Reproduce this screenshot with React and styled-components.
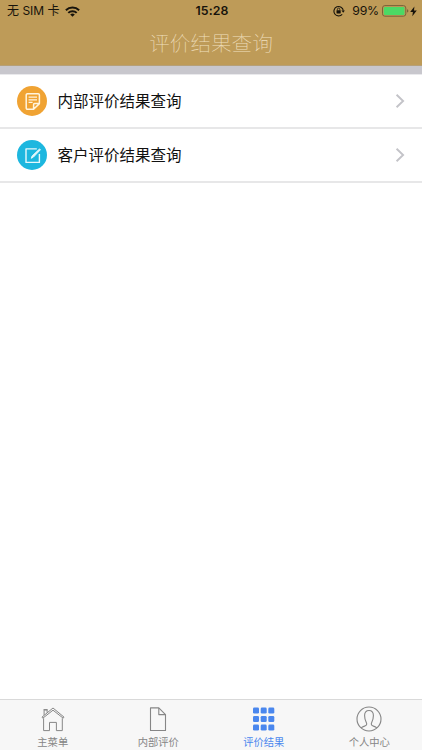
import React, { useState } from "react";
import styled, { createGlobalStyle } from "styled-components";

const GlobalStyle = createGlobalStyle`
  * {
    box-sizing: border-box;
  }
  body {
    margin: 0;
    background: #fff;
    font-family: Inter, "Noto Sans CJK SC", sans-serif;
  }
`;

const Screen = styled.div`
  display: flex;
  flex-direction: column;
  width: 100%;
  height: 100vh;
  overflow: hidden;
`;
const Header = styled.header`
  flex: none;
  height: 66px;
  background: #be9b58;
  border-bottom: 1px solid #b6a078;
`;
const StatusBar = styled.div`
  display: grid;
  grid-template-columns: 1fr auto 1fr;
  align-items: center;
  height: 22px;
  padding: 0 5px 0 7px;
  color: #17130b;
  font-size: 12.3px;
  line-height: 22px;
`;
const StatusGroup = styled.div`
  display: flex;
  align-items: center;
  justify-content: ${(props) => props.$align || "flex-start"};
  white-space: pre;
`;
const Carrier = styled.span`
  margin-right: 5px;
  font-size: 12px;
`;
const Clock = styled.span`
  font-size: 12.3px;
  font-weight: 600;
  letter-spacing: 0.1px;
`;
const Percent = styled.span`
  margin: 0 3px 0 7px;
  letter-spacing: -0.2px;
`;
const Title = styled.h1`
  margin: 0;
  height: 43px;
  color: #efdfbd;
  font-family: "Noto Sans CJK SC", sans-serif;
  font-size: 20.6px;
  font-weight: 100;
  line-height: 40px;
  text-align: center;
`;
const Strip = styled.div`
  flex: none;
  height: 9px;
  background: #c8c7cd;
  border-bottom: 1px solid #e9e9ec;
`;
const List = styled.main`
  flex: 1;
`;
const Row = styled.div`
  display: flex;
  align-items: center;
  height: 54px;
  padding: 0 17px;
  border-bottom: 2px solid #e7e7e8;
  cursor: pointer;
`;
const Badge = styled.span`
  display: flex;
  align-items: center;
  justify-content: center;
  width: 30px;
  height: 30px;
  border-radius: 50%;
  background: ${(props) => props.$color};
`;
const RowLabel = styled.span`
  flex: 1;
  margin-left: 10.5px;
  padding-bottom: 2px;
  color: #111;
  font-family: "Noto Sans CJK SC", sans-serif;
  font-size: 15.5px;
  line-height: 24px;
`;
const TabBar = styled.nav`
  flex: none;
  display: grid;
  grid-template-columns: repeat(4, 1fr);
  height: 51px;
  background: #f7f7f7;
  border-top: 1px solid #d9d9d9;
`;
const Tab = styled.button`
  display: flex;
  flex-direction: column;
  align-items: center;
  padding: 6px 0 0;
  border: 0;
  background: none;
  color: ${(props) => (props.$active ? "#4a87ee" : "#868686")};
  font-family: "Noto Sans CJK SC", sans-serif;
  font-size: 10.3px;
  font-weight: 400;
  line-height: 16px;
  cursor: pointer;

  & svg {
    margin-bottom: 2px;
  }
`;

const WifiIcon = () => (
  <svg width="15" height="11" viewBox="0 0 15 11" fill="none" stroke="#17130b" strokeWidth="2">
    <path d="M0.9 4.2a9.4 9.4 0 0 1 13.2 0" />
    <path d="M3.3 6.9a6 6 0 0 1 8.4 0" />
    <path d="M7.5 10.8L5.2 8.5a3.3 3.3 0 0 1 4.6 0z" fill="#17130b" stroke="none" />
  </svg>
);

const RotationLockIcon = () => (
  <svg width="12" height="12" viewBox="0 0 12 12" fill="none" stroke="#17130b" strokeWidth="1.1">
    <path d="M9.2 9.3A4.7 4.7 0 1 1 10.3 5.6" />
    <path d="M8.4 5.4h3.5L10.2 7.8z" fill="#17130b" stroke="none" />
    <rect x="3.5" y="5.2" width="4.2" height="3.3" rx="0.4" fill="#17130b" stroke="none" />
    <path d="M4.4 5.4V4.3a1.2 1.2 0 0 1 2.4 0v1.1" strokeWidth="0.8" />
  </svg>
);

const BatteryIcon = () => (
  <svg width="28" height="12" viewBox="0 0 28 12">
    <rect x="0.5" y="0.6" width="23.3" height="10.6" rx="2.4" fill="none" stroke="#796239" />
    <rect x="1.8" y="1.9" width="20.7" height="8" rx="1.2" fill="#4cd964" />
    <path d="M25 4.2q1.4 0.4 1.4 1.7T25 7.6z" fill="#796239" />
  </svg>
);

const BoltIcon = () => (
  <svg width="7" height="11" viewBox="0 0 7 11" fill="#17130b">
    <path d="M4.4 0.6L0.2 6.1h2.7L2.3 10.2l4.5-5.6H4z" />
  </svg>
);

const NoteIcon = () => (
  <svg width="17" height="19" viewBox="0 0 17 19" fill="none" stroke="#fff4df" strokeWidth="1.5" strokeLinejoin="round">
    <path d="M9.6 17.2H3.4a1.2 1.2 0 0 1-1.2-1.2V3a1.2 1.2 0 0 1 1.2-1.2h10.8A1.2 1.2 0 0 1 15.4 3v8.6l-5.8 5.6v-4.8q0-0.9 0.9-0.9h4.9" />
    <path d="M4.6 5.2h8.4M4.6 7.8h8.4M4.6 10.4h4" strokeWidth="1.3" />
  </svg>
);

const EditIcon = () => (
  <svg width="17" height="17" viewBox="0 0 17 17" fill="none" stroke="#e6f8fc" strokeWidth="1.4" strokeLinejoin="round">
    <path d="M12.8 1.9H2v13.5h13.4V7" />
    <path d="M7.3 11.3l0.8-2.3L15.6 1.9l0.8 0.9-7 7.3z" strokeWidth="1" fill="#e6f8fc" />
  </svg>
);

const ChevronIcon = () => (
  <svg width="10" height="16" viewBox="0 0 10 16" fill="none" stroke="#c3c3c8" strokeWidth="1.9">
    <path d="M1.6 1.7L8.1 8l-6.5 6.3" />
  </svg>
);

const HomeIcon = () => (
  <svg width="26" height="26" viewBox="0 0 26 26" fill="none" stroke="currentColor" strokeWidth="1" strokeLinejoin="round">
    <path d="M3.6 12.3v12.3h5.9v-8.2h6.9v8.2h5.9V12.3" />
    <path d="M2 11.1L13 2l11 9.1-0.8 1.1L13 4.2 2.8 12.2z" />
    <path d="M4.1 9.1V4h3v2.6M3.5 3.6h4.2" />
  </svg>
);

const FileIcon = () => (
  <svg width="26" height="26" viewBox="0 0 26 26" fill="none" stroke="currentColor" strokeWidth="1.1" strokeLinejoin="round">
    <path d="M5.5 1.9h8.3l6.7 6.7v15.9h-15z" />
    <path d="M13.8 1.9v6.7h6.7" />
  </svg>
);

const GridIcon = () => (
  <svg width="26" height="26" viewBox="0 0 26 26" fill="currentColor">
    {[1.6, 10, 18.6].map((y, row) =>
      [2, 9.7, 17.3].map((x, col) => (
        <rect key={`${row}-${col}`} x={x} y={y} width="6" height="6" rx="1.3" />
      ))
    )}
  </svg>
);

const PersonIcon = () => (
  <svg width="26" height="26" viewBox="0 0 26 26" fill="none" stroke="currentColor" strokeWidth="1.1">
    <circle cx="13" cy="13" r="12" />
    <path d="M5.1 22.1c1-1.2 2.4-1.6 3.8-2.1 1.8-0.6 2.3-1.7 1.3-3.7C9 14 8.6 12.3 8.6 9.6c0-3.3 1.5-5.1 4.4-5.1s4.4 1.8 4.4 5.1c0 2.7-0.4 4.4-1.6 6.7-1 2-0.5 3.1 1.3 3.7 1.4 0.5 2.8 0.9 3.8 2.1" />
  </svg>
);

const rows = [
  { label: "内部评价结果查询", color: "#f0a333", icon: <NoteIcon /> },
  { label: "客户评价结果查询", color: "#1db7df", icon: <EditIcon /> },
];

const tabs = [
  { label: "主菜单", icon: <HomeIcon /> },
  { label: "内部评价", icon: <FileIcon /> },
  { label: "评价结果", icon: <GridIcon /> },
  { label: "个人中心", icon: <PersonIcon /> },
];

const App = () => {
  const [activeTab, setActiveTab] = useState(2);

  return (
    <Screen>
      <GlobalStyle />
      <Header>
        <StatusBar>
          <StatusGroup>
            <Carrier>无 SIM 卡</Carrier>
            <WifiIcon />
          </StatusGroup>
          <Clock>15:28</Clock>
          <StatusGroup $align="flex-end">
            <RotationLockIcon />
            <Percent>99%</Percent>
            <BatteryIcon />
            <BoltIcon />
          </StatusGroup>
        </StatusBar>
        <Title>评价结果查询</Title>
      </Header>
      <Strip />
      <List>
        {rows.map((row) => (
          <Row key={row.label}>
            <Badge $color={row.color}>{row.icon}</Badge>
            <RowLabel>{row.label}</RowLabel>
            <ChevronIcon />
          </Row>
        ))}
      </List>
      <TabBar>
        {tabs.map((tab, index) => (
          <Tab
            key={tab.label}
            $active={index === activeTab}
            onClick={() => setActiveTab(index)}
          >
            {tab.icon}
            {tab.label}
          </Tab>
        ))}
      </TabBar>
    </Screen>
  );
};
export default App;
